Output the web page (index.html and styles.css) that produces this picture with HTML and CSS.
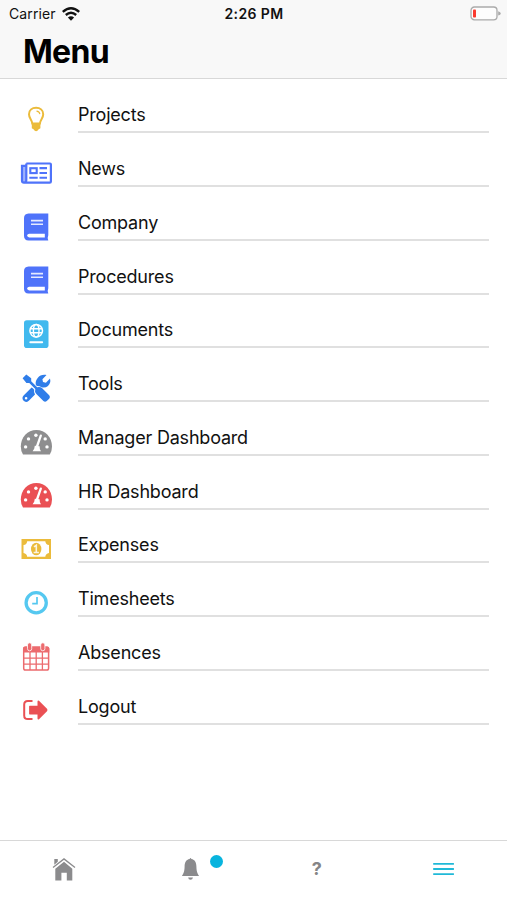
FILE: index.html
```html
<!DOCTYPE html>
<html lang="en">
<head>
<meta charset="utf-8">
<title>Menu</title>
<link rel="stylesheet" href="styles.css">
</head>
<body>
<svg width="0" height="0" class="defs">
  <symbol id="book" viewBox="0 0 32 32">
    <path fill="currentColor" d="M8.5 2.4H28.3V24.3Q27.2 26.5 28.3 29.6H8.5Q4 29.3 4 24.8V7Q4 2.8 8.5 2.4Z"/>
    <path fill="none" stroke="#fff" stroke-opacity=".85" stroke-width="1.6" d="M11 9.6H23M11 13.2H23"/>
    <path fill="#fff" d="M9.3 22.7H24.8V26.6H9.3Q7.2 26.3 7.2 24.6T9.3 22.7Z"/>
  </symbol>
  <symbol id="gauge" viewBox="0 0 32 32">
    <path fill="currentColor" d="M3 28.5Q.8 25 .8 20.5C.8 11 7.5 3.9 16.4 3.9S32 11 32 20.5Q32 25 29.8 28.5Z"/>
    <g fill="#fff"><circle cx="5.6" cy="20.9" r="1.7"/><circle cx="8.5" cy="12.9" r="1.7"/><circle cx="15.9" cy="9.2" r="1.7"/><circle cx="25.2" cy="12.9" r="1.7"/><circle cx="27" cy="20.9" r="1.7"/></g>
    <path stroke="#fff" stroke-width="2.3" stroke-linecap="round" d="M16.8 21L20.8 9.6"/>
    <path fill="#fff" d="M14.8 19.8L19.6 20.2L19.9 23.2L21 25.2H12.6L14.2 22.8Z"/>
  </symbol>
</svg>
<div class="screen">
  <header class="header">
    <div class="status">
      <div class="carrier">Carrier
        <svg class="wifi" viewBox="0 0 18 14"><g fill="none" stroke="#111" stroke-width="2.4"><path d="M.8 4.9Q9 -2.2 17.2 4.9"/><path d="M3.8 8Q9 3.5 14.2 8"/></g><path fill="#111" d="M5.9 10.4Q9 7.9 12.1 10.4L9 13.7Z"/></svg>
      </div>
      <div class="time">2:26 PM</div>
      <svg class="battery" viewBox="0 0 31 15"><rect x="1" y="1" width="26" height="12.8" rx="3.4" fill="#fdfdfd" stroke="#aaa" stroke-width="1.3"/><path fill="#aaa" d="M28.2 5.2Q30.8 6 30.8 7.4T28.2 9.6Z"/><rect x="3" y="3.4" width="3" height="8.2" rx=".8" fill="#fb3b30"/></svg>
    </div>
    <h1>Menu</h1>
  </header>
  <main class="list">
    <a class="row"><svg class="icon yellow" viewBox="0 0 32 32"><path fill="none" stroke="currentColor" stroke-width="2" d="M12.3 20.6C12 16.6 9 15.6 9 11.3C9 7.3 12.1 4.8 16.1 4.8S23.2 7.3 23.2 11.3C23.2 15.6 20.2 16.6 19.9 20.6Z"/><path fill="none" stroke="currentColor" stroke-width="1.1" d="M16.5 8.1Q19.4 8.4 19.9 11.1"/><path fill="currentColor" d="M11.8 20H20.4V25.3L18.4 26.5Q17.7 28.2 16.1 28.2T13.8 26.5L11.8 25.3Z"/></svg><span class="label">Projects</span></a>
    <a class="row"><svg class="icon blue" viewBox="0 0 32 32"><path fill="none" stroke="currentColor" stroke-width="2.2" d="M6.3 6.5H30Q30.9 6.5 30.9 7.4V24.4Q30.9 25.6 29.7 25.6H4Q2 25.6 2 23.8V8.8H5.6M6.3 6.5V23.3Q6.2 25.6 4 25.6"/><path fill="currentColor" opacity=".55" d="M2 9H6V25H2Z"/><rect x="10.3" y="11.2" width="6.4" height="4.9" fill="none" stroke="currentColor" stroke-width="2.1"/><path fill="none" stroke="currentColor" stroke-width="2.1" d="M19.5 11.1H27M19.5 16H27M9.3 20.7H17.7M19.5 20.7H27"/></svg><span class="label">News</span></a>
    <a class="row"><svg class="icon blue"><use href="#book"/></svg><span class="label">Company</span></a>
    <a class="row"><svg class="icon blue"><use href="#book"/></svg><span class="label">Procedures</span></a>
    <a class="row"><svg class="icon sky" viewBox="0 0 32 32"><rect x="4" y="2.2" width="24.5" height="27.8" rx="2.8" fill="currentColor"/><g fill="none" stroke="#fff"><circle cx="16.2" cy="12.8" r="6.3" stroke-width="1.5"/><ellipse cx="16.2" cy="12.8" rx="2.8" ry="6.3" stroke-width="1.4"/><path stroke-width="1.4" d="M10.4 10.8H22M10.4 14.8H22"/><path stroke-width="1.9" stroke-linecap="round" d="M10.3 24.3H22.2"/></g></svg><span class="label">Documents</span></a>
    <a class="row"><svg class="icon azure" viewBox="0 0 32 32"><path fill="currentColor" d="M6.3 2.5L11.2 6.3V9.2L17.2 15.2Q20 14.2 22.2 16.3L29.2 23.3Q30.7 25 29.2 26.7L26.8 29.1Q25.1 30.6 23.4 29.1L16.4 22.1Q14.3 19.9 15.3 17.1L9.3 11.1H6.4L2.6 6.2Z"/><path fill="currentColor" d="M26.5 3.1L22.4 7.2L23 10.1L25.9 10.7L30 6.6Q31.2 11.1 28 13.9Q25.1 16.2 21.5 15.2Q19.4 13.7 16.9 13.9L15.8 12.8C14.9 7.2 20 1.5 26.5 3.1Z"/><path fill="currentColor" fill-rule="evenodd" d="M12.8 16.3L14.2 17.7Q13.5 20.4 15 22.4L8.8 28.7Q6 31 3.6 28.8Q1.3 26 3.6 23.5L11.6 15.5ZM7.4 26.2A1.3 1.3 0 1 0 4.8 26.2A1.3 1.3 0 1 0 7.4 26.2Z"/></svg><span class="label">Tools</span></a>
    <a class="row"><svg class="icon gray"><use href="#gauge"/></svg><span class="label">Manager Dashboard</span></a>
    <a class="row"><svg class="icon red"><use href="#gauge"/></svg><span class="label">HR Dashboard</span></a>
    <a class="row"><svg class="icon yellow" viewBox="0 0 32 32"><path fill="currentColor" fill-rule="evenodd" d="M1.5 6H31V26H1.5ZM7.2 8.2Q6.8 11.7 3.5 12.1V19.9Q6.8 20.3 7.2 23.8H25.3Q25.7 20.3 29 19.9V12.1Q25.7 11.7 25.3 8.2Z"/><ellipse cx="16.2" cy="16" rx="5.2" ry="6.3" fill="currentColor"/><path fill="none" stroke="#fff" stroke-opacity=".85" stroke-width="1.6" d="M14 13.9L16.3 12.3V19.4M13.6 19.5H18.9"/></svg><span class="label">Expenses</span></a>
    <a class="row"><svg class="icon cyan" viewBox="0 0 32 32"><circle cx="16.2" cy="15.7" r="10.1" fill="none" stroke="currentColor" stroke-width="3.3"/><path fill="none" stroke="currentColor" stroke-width="1.7" d="M17 10V16.6H12.2"/></svg><span class="label">Timesheets</span></a>
    <a class="row"><svg class="icon coral" viewBox="0 0 32 32"><rect x="3.7" y="6.2" width="24.9" height="22.8" rx="1.8" fill="#fff" stroke="currentColor" stroke-width="1.5"/><path fill="currentColor" d="M3 7.5Q3 5.6 5 5.6H27.3Q29.3 5.6 29.3 7.5V11.6H3Z"/><path fill="none" stroke="currentColor" stroke-width="1.3" d="M10 11V29M16.2 11V29M22.4 11V29M4 17.2H28.5M4 23.2H28.5"/><g fill="currentColor" stroke="#fff" stroke-width=".8"><rect x="7.5" y="1.8" width="4.2" height="8" rx="2.1"/><rect x="20.7" y="1.8" width="4.2" height="8" rx="2.1"/></g></svg><span class="label">Absences</span></a>
    <a class="row"><svg class="icon red" viewBox="0 0 32 32"><path fill="none" stroke="currentColor" stroke-width="2" d="M12.5 7H7.8Q4.2 7 4.2 10.5V21.5Q4.2 25.1 7.8 25.1H12.5"/><path fill="currentColor" d="M9.7 11.8H17.5V7.4Q17.7 6 19 6.8L27 14.8Q28 16 27 17.2L19 25.2Q17.7 26 17.5 24.6V20.4H9.7Q9.1 20.4 9.1 19.7V12.5Q9.1 11.8 9.7 11.8Z"/></svg><span class="label">Logout</span></a>
  </main>
  <nav class="tabs">
    <a class="tab"><svg class="tabicon" viewBox="0 0 26 26"><path fill="#8b8b8d" d="M4.3 3H7.8V5.7L4.3 8.8ZM5.3 12.8L14 5.8L22.3 12.8V24.5H16.8V16.8H11.4V24.5H5.3Z"/><path fill="none" stroke="#8b8b8d" stroke-width="1.3" d="M3 11.6L14 2.9L25 11.6"/></svg></a>
    <a class="tab"><svg class="tabicon" viewBox="0 0 26 26"><path fill="#8b8b8d" d="M12.6 3.1Q13.5 .9 14.4 3.1C18 3.8 19.3 6.5 19.4 10.5C19.5 15.3 20.3 17.2 22.1 20H4.9C6.7 17.2 7.5 15.3 7.6 10.5C7.7 6.5 9 3.8 12.6 3.1ZM11.1 21.4H16Q15.5 23.8 13.5 23.8T11.1 21.4Z"/></svg><i class="badge"></i></a>
    <a class="tab"><span class="help">?</span></a>
    <a class="tab"><svg class="tabicon" viewBox="0 0 26 26"><path stroke="#20b9d8" stroke-width="1.8" d="M2.2 7.8H22.9M2.2 13H22.9M2.2 18.2H22.9"/></svg></a>
  </nav>
</div>
</body>
</html>
```
FILE: styles.css
```css
* { box-sizing: border-box; }
body { margin: 0; font-family: Inter, "Liberation Sans", sans-serif; color: #111; background: #fff; }
.defs { position: absolute; }
.screen { height: 900px; display: flex; flex-direction: column; overflow: hidden; }
.header { height: 79px; background: #f8f8f8; border-bottom: 1px solid #d8d8d8; }
.status { height: 27px; padding: 0 6px 0 9px; display: grid; grid-template-columns: 1fr auto 1fr; align-items: center; font-size: 14px; }
.carrier { display: flex; align-items: center; gap: 6px; letter-spacing: 0.1px; }
.wifi { width: 18px; height: 14px; }
.time { font-weight: 600; letter-spacing: 0.4px; margin-left: -2px; }
.battery { width: 31px; height: 15px; justify-self: end; }
h1 { margin: 5px 0 0 23px; font-size: 32px; line-height: 40px; font-weight: 700; letter-spacing: -0.7px; color: #000; }
.list { flex: 1; }
.row { height: 53.78px; display: flex; padding: 0 18px 0 20px; }
.icon { width: 32px; height: 32px; margin-top: 24px; flex: none; overflow: visible; }
.label { flex: 1; margin-left: 26px; padding-top: 25.3px; height: 54.3px; border-bottom: 2px solid #e0e0e0; font-size: 18px; line-height: 22px; letter-spacing: -0.2px; }
.yellow { color: #ebbb3b; }
.blue { color: #4f73fa; }
.sky { color: #41b9ee; }
.azure { color: #2f7de9; }
.gray { color: #8e8e8f; }
.red { color: #ea5054; }
.cyan { color: #55c8f0; }
.coral { color: #ec6b6e; }
.tabs { height: 60px; border-top: 1px solid #d8d8d8; display: grid; grid-template-columns: repeat(4, 1fr); }
.tab { position: relative; display: flex; justify-content: center; padding-top: 15px; }
.tabicon { width: 26px; height: 26px; }
.badge { position: absolute; left: 83px; top: 14px; width: 13px; height: 13px; border-radius: 50%; background: #08b4de; }
.help { font-size: 18px; line-height: 26px; font-weight: 700; color: #858587; }
```
